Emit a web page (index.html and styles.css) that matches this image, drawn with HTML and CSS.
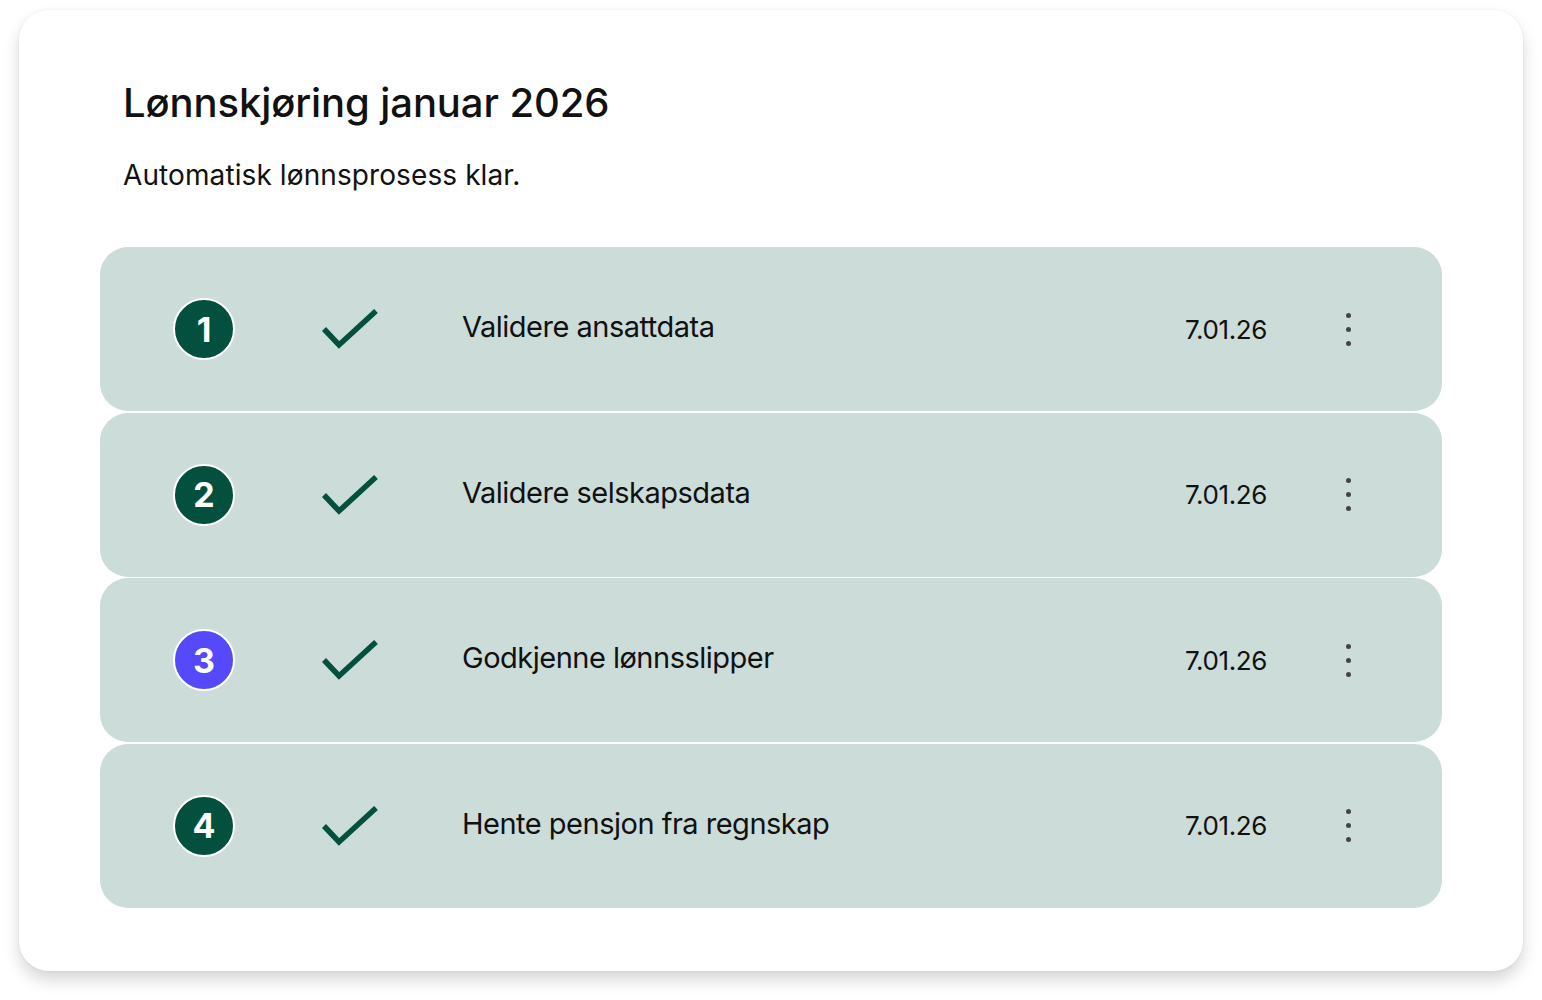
FILE: index.html
```html
<!DOCTYPE html>
<html lang="no">
<head>
    <meta charset="UTF-8">
    <meta name="viewport" content="width=device-width, initial-scale=1.0">
    <title>Lønnskjøring januar 2026</title>
    <link rel="stylesheet" href="styles.css">
</head>
<body>

<div class="panel">
    <div class="header">
        <h1>Lønnskjøring januar 2026</h1>
        <p>Automatisk lønnsprosess klar.</p>
    </div>

    <div class="steps">
        <div class="step">
            <span class="badge">1</span>
            <svg class="check" viewBox="0 0 56 40"><path d="M2 20 L17 36 L54 2"/></svg>
            <span class="label">Validere ansattdata</span>
            <span class="date">7.01.26</span>
            <span class="more"><i></i><i></i><i></i></span>
        </div>
        <div class="step">
            <span class="badge">2</span>
            <svg class="check" viewBox="0 0 56 40"><path d="M2 20 L17 36 L54 2"/></svg>
            <span class="label">Validere selskapsdata</span>
            <span class="date">7.01.26</span>
            <span class="more"><i></i><i></i><i></i></span>
        </div>
        <div class="step">
            <span class="badge active">3</span>
            <svg class="check" viewBox="0 0 56 40"><path d="M2 20 L17 36 L54 2"/></svg>
            <span class="label">Godkjenne lønnsslipper</span>
            <span class="date">7.01.26</span>
            <span class="more"><i></i><i></i><i></i></span>
        </div>
        <div class="step">
            <span class="badge">4</span>
            <svg class="check" viewBox="0 0 56 40"><path d="M2 20 L17 36 L54 2"/></svg>
            <span class="label">Hente pensjon fra regnskap</span>
            <span class="date">7.01.26</span>
            <span class="more"><i></i><i></i><i></i></span>
        </div>
    </div>
</div>

</body>
</html>
```

FILE: styles.css
```css
body {
    font-family: Inter, "Noto Sans", sans-serif;
    margin: 0;
    padding: 10px 0 30px 19px;
    background-color: #fff;
    color: #111;
}
.panel {
    width: 1504px;
    box-sizing: border-box;
    padding: 62px 81px 63px;
    background-color: #fff;
    border-radius: 30px;
    box-shadow: 0 9px 16px rgba(0, 0, 0, 0.16), 0 0 3px rgba(0, 0, 0, 0.06);
}
.header {
    padding-left: 23px;
    height: 175px;
}
.header h1 {
    margin: 0;
    font-size: 40px;
    font-weight: 500;
    line-height: 62px;
    letter-spacing: -0.1px;
}
.header p {
    margin: 23px 0 0;
    font-size: 28px;
    line-height: 36px;
    letter-spacing: 0.1px;
}
.steps {
    display: flex;
    flex-direction: column;
    gap: 1.5px;
}
.step {
    display: flex;
    align-items: center;
    height: 164px;
    padding: 0 84px 0 73px;
    background-color: #ccdcd8;
    border-radius: 28px;
}
.badge {
    width: 58px;
    height: 58px;
    flex: none;
    border-radius: 50%;
    border: 2px solid #fff;
    background-color: #03503e;
    color: #fff;
    font-size: 34px;
    font-weight: 700;
    display: flex;
    align-items: center;
    justify-content: center;
}
.badge.active {
    background-color: #5549fb;
}
.check {
    width: 56px;
    height: 40px;
    flex: none;
    margin-left: 87px;
    fill: none;
    stroke: #03503e;
    stroke-width: 5.5;
}
.label {
    flex: 1;
    margin-left: 84px;
    margin-bottom: 5px;
    font-size: 29px;
    letter-spacing: -0.5px;
}
.date {
    font-size: 26px;
    letter-spacing: -0.4px;
}
.more {
    width: 20px;
    margin-left: 71px;
    display: flex;
    flex-direction: column;
    align-items: center;
    gap: 9px;
}
.more i {
    width: 5px;
    height: 5px;
    border-radius: 50%;
    background-color: #444;
}
```
